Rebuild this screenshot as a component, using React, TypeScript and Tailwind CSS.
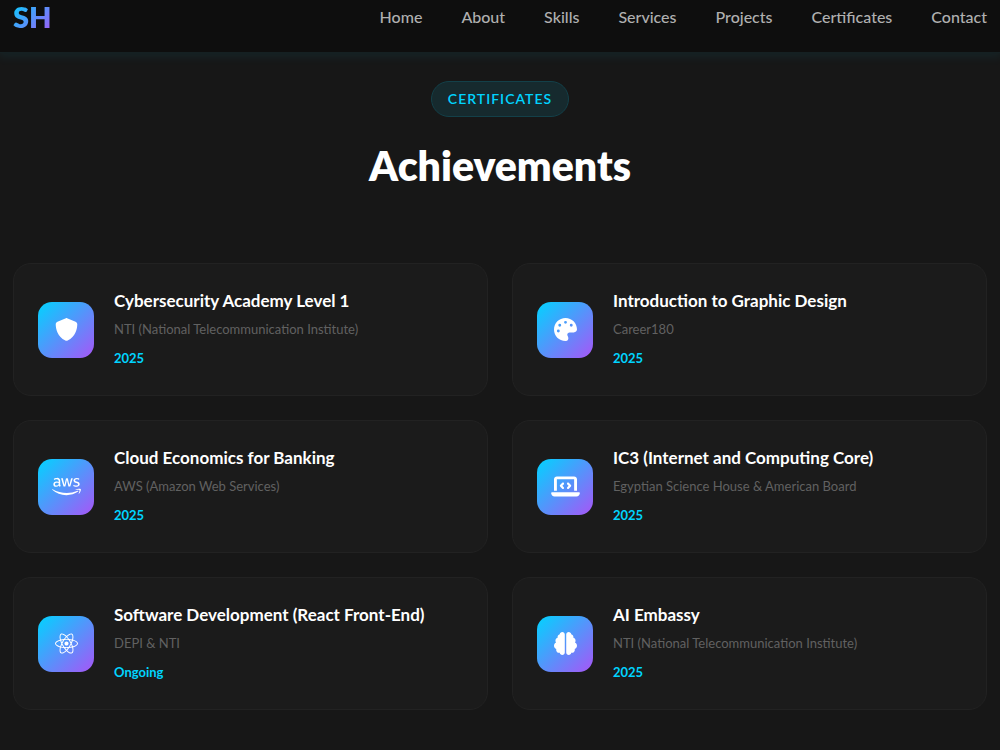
import type { IconType } from 'react-icons';
import { FaAws, FaBrain, FaLaptopCode, FaPalette, FaReact, FaShield } from 'react-icons/fa6';

interface Certificate {
  title: string;
  issuer: string;
  date: string;
  icon: IconType;
}

const navLinks = ['Home', 'About', 'Skills', 'Services', 'Projects', 'Certificates', 'Contact'];

const certificates: Certificate[] = [
  { title: 'Cybersecurity Academy Level 1', issuer: 'NTI (National Telecommunication Institute)', date: '2025', icon: FaShield },
  { title: 'Introduction to Graphic Design', issuer: 'Career180', date: '2025', icon: FaPalette },
  { title: 'Cloud Economics for Banking', issuer: 'AWS (Amazon Web Services)', date: '2025', icon: FaAws },
  { title: 'IC3 (Internet and Computing Core)', issuer: 'Egyptian Science House & American Board', date: '2025', icon: FaLaptopCode },
  { title: 'Software Development (React Front-End)', issuer: 'DEPI & NTI', date: 'Ongoing', icon: FaReact },
  { title: 'AI Embassy', issuer: 'NTI (National Telecommunication Institute)', date: '2025', icon: FaBrain },
];

function Navbar() {
  return (
    <header className="relative flex items-start justify-between border-b border-[#152022] bg-[#0e0e0e] px-[13px] pb-[18px] shadow-[0_2px_10px_2px_rgba(0,212,255,0.07)]">
      <a
        href="#home"
        className="bg-[linear-gradient(135deg,#00d4ff,#a855f7)] bg-clip-text text-[29px] leading-[34px] font-extrabold text-transparent"
      >
        SH
      </a>
      <nav>
        <ul className="flex gap-[39px]">
          {navLinks.map((link) => (
            <li key={link}>
              <a href={`#${link.toLowerCase()}`} className="text-base leading-[34px] font-medium text-[#b0b0b0]">
                {link}
              </a>
            </li>
          ))}
        </ul>
      </nav>
    </header>
  );
}

function CertificateCard({ title, issuer, date, icon: Icon }: Certificate) {
  return (
    <article className="flex items-center gap-5 rounded-[18px] border border-[#222222] bg-[#1b1b1b] px-6 py-[23px]">
      <div className="flex size-14 shrink-0 items-center justify-center rounded-[14px] bg-[linear-gradient(135deg,#00d4ff,#a855f7)] text-white">
        <Icon className="h-[23px] w-[29px]" />
      </div>
      <div>
        <h3 className="text-[17px] leading-7 font-bold text-white">{title}</h3>
        <p className="text-[13px] leading-7 text-[#616161]">{issuer}</p>
        <p className="mt-px text-[13px] leading-7 font-bold text-[#00d4ff]">{date}</p>
      </div>
    </article>
  );
}

export default function App() {
  return (
    <div className="min-h-screen bg-[#171717] font-[Lato,sans-serif]">
      <Navbar />
      <section id="certificates" className="px-[13px] pt-7 pb-10">
        <div className="mb-17 text-center">
          <span className="inline-block rounded-full border border-[#134049] bg-[#162a2e] px-4 py-1.5 text-sm leading-[22px] font-semibold tracking-[1px] text-[#00d4ff] uppercase">
            Certificates
          </span>
          <h2 className="mt-5 text-[41px] leading-[58px] font-extrabold text-white">Achievements</h2>
        </div>
        <div className="grid grid-cols-1 gap-6 md:grid-cols-2">
          {certificates.map((certificate) => (
            <CertificateCard key={certificate.title} {...certificate} />
          ))}
        </div>
      </section>
    </div>
  );
}
